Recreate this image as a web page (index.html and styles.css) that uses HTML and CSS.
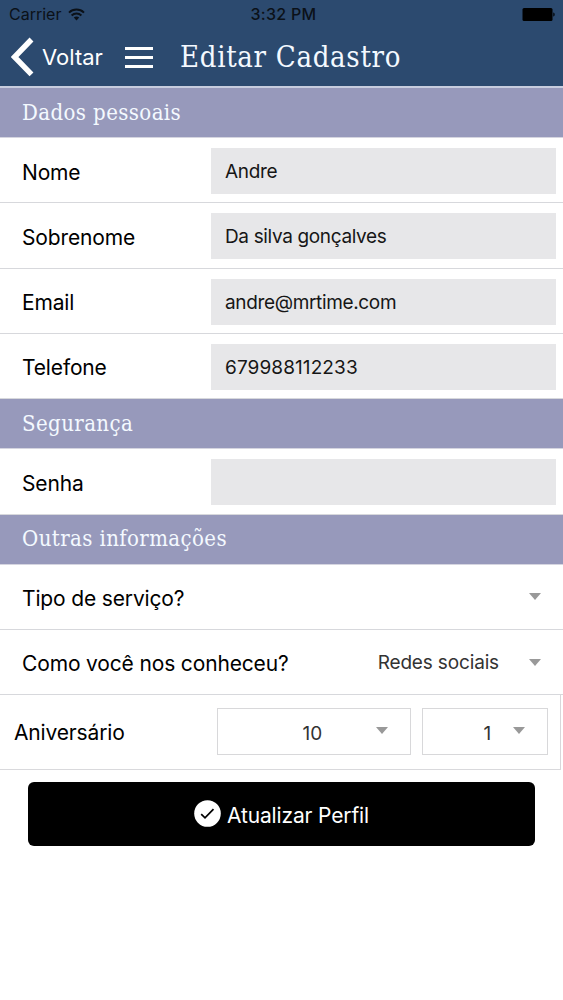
FILE: index.html
```html
<!DOCTYPE html>
<html lang="pt-BR">
<head>
    <meta charset="UTF-8">
    <meta name="viewport" content="width=device-width, initial-scale=1.0">
    <title>Editar Cadastro</title>
    <link rel="stylesheet" href="styles.css">
</head>
<body>
    <header class="header">
        <div class="status-bar">
            <div class="carrier">
                <span>Carrier</span>
                <svg width="17" height="13" viewBox="0 0 17 13" fill="none" stroke="#0b1118" stroke-width="2">
                    <path d="M1 4.6C5.2 .6 11.8 .6 16 4.6M3.6 7.4c2.8-2.6 7-2.6 9.8 0"/>
                    <path d="M8.5 12.4L5.8 9.6c1.5-1.4 3.9-1.4 5.4 0z" fill="#0b1118" stroke="none"/>
                </svg>
            </div>
            <span class="time">3:32 PM</span>
            <svg class="battery" width="33" height="13" viewBox="0 0 33 13">
                <rect x="0.5" y="0" width="30" height="13" rx="1.5"/>
                <path d="M31.3 4.5c1.8.6 1.8 3.4 0 4z"/>
            </svg>
        </div>
        <div class="nav-bar">
            <a class="back" href="#">
                <svg width="23" height="40" viewBox="0 0 23 40" fill="none" stroke="#fff" stroke-width="5.4">
                    <path d="M20.5 2.5L3.6 20l16.9 17.3"/>
                </svg>
                <span>Voltar</span>
            </a>
            <button class="menu" type="button" aria-label="Menu"><i></i><i></i><i></i></button>
            <h1>Editar Cadastro</h1>
        </div>
    </header>

    <form>
        <h2 class="divider first">Dados pessoais</h2>
        <div class="item">
            <label for="nome">Nome</label>
            <input type="text" id="nome" value="Andre">
        </div>
        <div class="item">
            <label for="sobrenome">Sobrenome</label>
            <input type="text" id="sobrenome" value="Da silva gonçalves">
        </div>
        <div class="item">
            <label for="email">Email</label>
            <input type="email" id="email" value="andre@mrtime.com">
        </div>
        <div class="item">
            <label for="telefone">Telefone</label>
            <input class="phone" type="tel" id="telefone" value="679988112233">
        </div>

        <h2 class="divider">Segurança</h2>
        <div class="item">
            <label for="senha">Senha</label>
            <input type="password" id="senha">
        </div>

        <h2 class="divider">Outras informações</h2>
        <div class="item item-select">
            <span class="question">Tipo de serviço?</span>
            <span class="arrow"></span>
        </div>
        <div class="item item-select">
            <span class="question">Como você nos conheceu?</span>
            <span class="value">Redes sociais</span>
            <span class="arrow"></span>
        </div>

        <div class="birthday">
            <span class="birthday-label">Aniversário</span>
            <div class="select day"><span>10</span><span class="arrow"></span></div>
            <div class="select month"><span>1</span><span class="arrow"></span></div>
        </div>

        <button class="submit" type="button">
            <svg width="27" height="27" viewBox="0 0 27 27">
                <circle cx="13.5" cy="13.5" r="13.3" fill="#fff"/>
                <path d="M7.2 14.2l3.8 3.7 8.5-8.7" fill="none" stroke="#000" stroke-width="1.7"/>
            </svg>
            <span>Atualizar Perfil</span>
        </button>
    </form>
</body>
</html>
```
FILE: styles.css
```css
* {
    box-sizing: border-box;
}

body {
    margin: 0;
    background-color: #fff;
    color: #000;
    font-family: Inter, "Liberation Sans", sans-serif;
    font-size: 21px;
    letter-spacing: -0.15px;
}

.header {
    height: 86px;
    background-color: #2c4a6f;
}

.status-bar {
    display: grid;
    grid-template-columns: 1fr auto 1fr;
    align-items: center;
    height: 28px;
    padding: 0 8px 0 9px;
    font-size: 16px;
    color: #0b1118;
}

.carrier {
    display: flex;
    align-items: center;
    gap: 7px;
    letter-spacing: 0;
}

.time {
    padding-left: 3px;
    font-weight: 500;
    letter-spacing: 0.3px;
}

.battery {
    justify-self: end;
}

.nav-bar {
    display: flex;
    align-items: center;
    height: 58px;
    padding-left: 11px;
    color: #fff;
}

.back {
    display: flex;
    align-items: center;
    gap: 8px;
    width: 114px;
    color: #fff;
    font-size: 22px;
    letter-spacing: 0;
    text-decoration: none;
}

.menu {
    display: flex;
    flex-direction: column;
    gap: 6px;
    width: 28px;
    margin-right: 27px;
    padding: 0;
    border: none;
    background: none;
}

.menu i {
    width: 28px;
    height: 3px;
    background-color: #fff;
}

h1,
h2 {
    margin: 0;
    font-family: "DejaVu Serif Condensed", "DejaVu Serif", serif;
    font-stretch: condensed;
    font-weight: normal;
    color: #f4f9ff;
}

h1 {
    font-size: 29px;
    letter-spacing: 0.7px;
}

.divider {
    display: flex;
    align-items: center;
    height: 50.25px;
    padding: 0 22px 1px;
    border-bottom: 1px solid #d5d5e0;
    background-color: #9799bb;
    font-size: 22px;
    letter-spacing: 0.4px;
}

.divider.first {
    height: 52px;
    border-top: 2px solid #c8cddf;
}

.item {
    display: flex;
    align-items: center;
    height: 65.25px;
    padding: 2px 7px 0 22px;
    border-bottom: 1px solid #d7d8dc;
}

.item label {
    width: 189px;
    padding-top: 2px;
}

.item input {
    flex: 1;
    min-width: 0;
    height: 46px;
    padding: 1px 14px 0;
    border: none;
    border-radius: 0;
    background-color: #e7e7e9;
    color: #161616;
    font: 19px Inter, "Liberation Sans", sans-serif;
    letter-spacing: -0.35px;
}

.item .phone {
    letter-spacing: 0.1px;
}

.item-select {
    padding: 3px 22px 0;
}

.question {
    flex: 1;
}

.value {
    margin: 0 30px 3px 0;
    font-size: 19px;
    color: #333;
}

.arrow {
    margin-bottom: 3px;
    border: 6.5px solid transparent;
    border-top: 7px solid #999;
    border-bottom: none;
}

.birthday {
    display: flex;
    align-items: center;
    width: 561px;
    height: 74.5px;
    padding: 0 0 1px 14px;
    border-right: 1px solid #d9d6da;
    border-bottom: 1px solid #d9d9dc;
}

.birthday-label {
    width: 203px;
    padding-top: 2px;
}

.select {
    display: flex;
    align-items: center;
    justify-content: flex-end;
    height: 47px;
    padding: 3px 22px 0 0;
    border: 1px solid #d8d8da;
    color: #333;
    font-size: 19px;
}

.select .arrow {
    margin-bottom: 6px;
}

.day {
    width: 194px;
    gap: 54px;
    margin-right: 11px;
}

.month {
    width: 126px;
    gap: 22px;
}

.submit {
    display: flex;
    align-items: center;
    justify-content: center;
    gap: 6px;
    width: 507px;
    height: 64px;
    margin: 12.5px 0 0 28px;
    padding-bottom: 2px;
    border: none;
    border-radius: 6px;
    background-color: #000;
    color: #fff;
    font: 21px Inter, "Liberation Sans", sans-serif;
    letter-spacing: -0.15px;
}

.submit span {
    padding-top: 3px;
}
```
